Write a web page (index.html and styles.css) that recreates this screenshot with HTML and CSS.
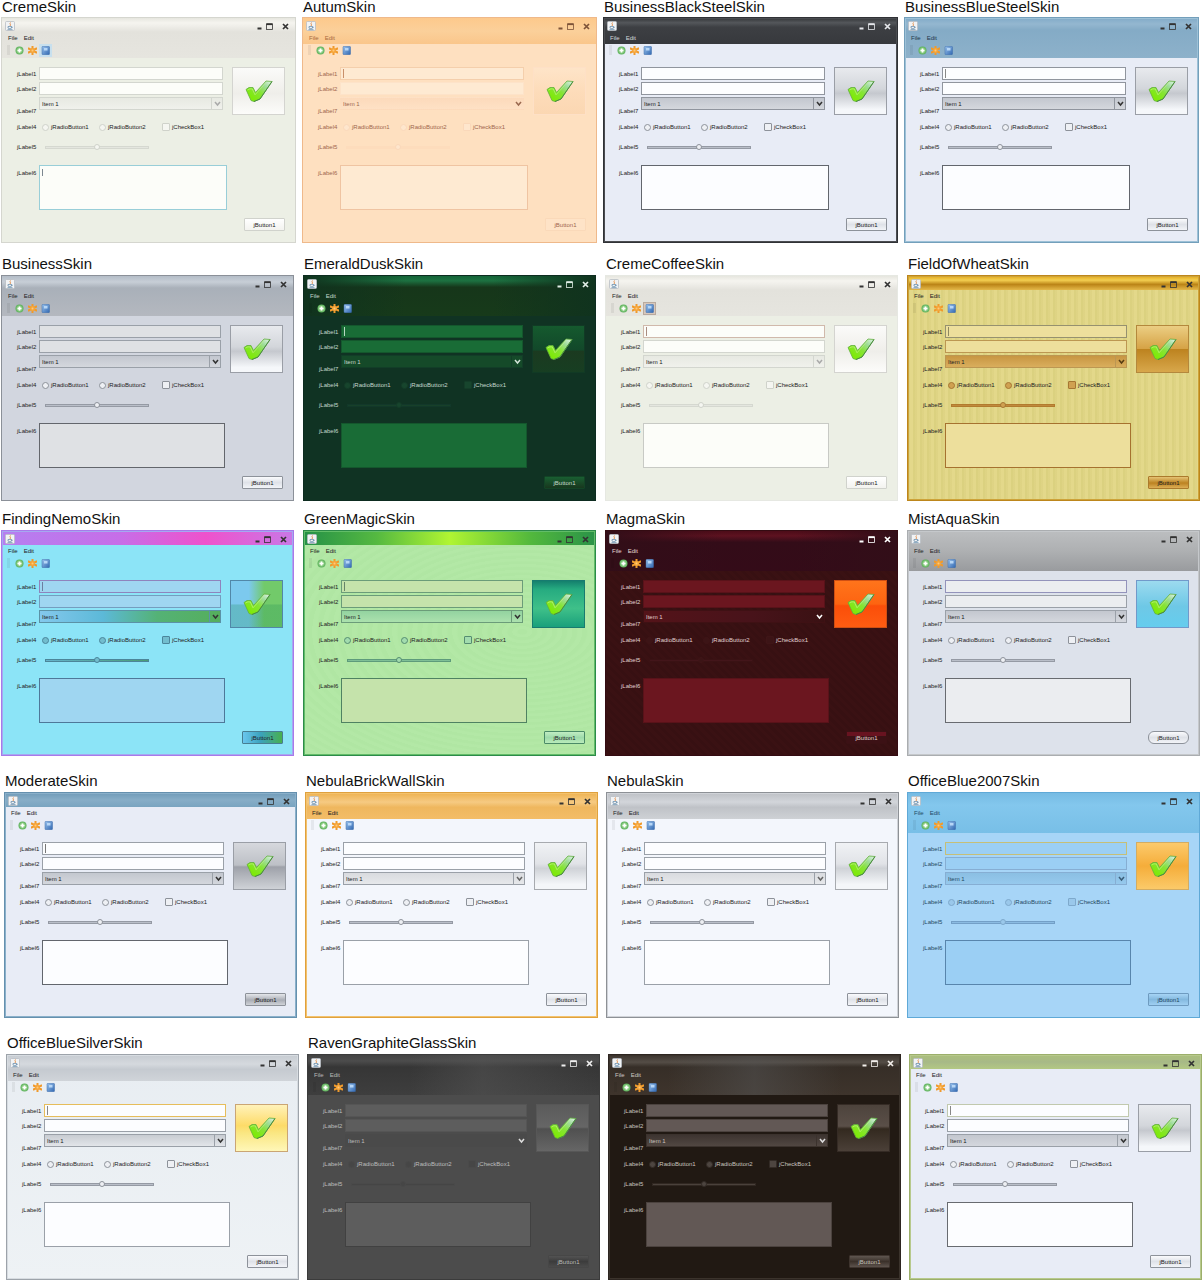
FILE: index.html
```html
<!DOCTYPE html>
<html lang="en">
<head>
<meta charset="utf-8">
<title>Skin gallery</title>
<link rel="stylesheet" href="styles.css">
</head>
<body>
<svg class="sprite" width="0" height="0" aria-hidden="true">
  <defs>
    <linearGradient id="tick-fill" x1="0" y1="1" x2="1" y2="0">
      <stop offset="0.2" stop-color="#7fea0a"/>
      <stop offset="0.5" stop-color="#86e436"/>
      <stop offset="0.75" stop-color="#9fdc9c"/>
      <stop offset="1" stop-color="#e4f6ea"/>
    </linearGradient>
    <radialGradient id="add-fill" cx="0.5" cy="0.5" r="0.6">
      <stop offset="0" stop-color="#c4ecb4"/>
      <stop offset="1" stop-color="#46a548"/>
    </radialGradient>
    <linearGradient id="book-fill" x1="0" y1="0" x2="1" y2="1">
      <stop offset="0" stop-color="#9cc4ee"/>
      <stop offset="1" stop-color="#2f66b0"/>
    </linearGradient>
  </defs>
  <symbol id="tick" viewBox="0 0 28 23">
    <path d="M1 9.500 4 7.500 8 7.500 10.500 12.500 21 1 27 1.500 15 19 9 21.500 6 20.500Z" fill="url(#tick-fill)" stroke="#62b03c" stroke-width="0.800" stroke-linejoin="round"/>
    <path d="M9 21.500 15 19 27 1.500" fill="none" stroke="#4a8a44" stroke-width="1" stroke-linejoin="round"/>
    <path d="M2.500 10 5 8.800 7.300 9 10 14.800 21 2.600" fill="none" stroke="#c4f28c" stroke-width="0.600"/>
  </symbol>
  <symbol id="add" viewBox="0 0 9 9">
    <circle cx="4.500" cy="4.500" r="4" fill="url(#add-fill)"/>
    <path d="M4.500 2.500v4M2.500 4.500h4" stroke="#fff" stroke-width="1.600"/>
  </symbol>
  <symbol id="star" viewBox="0 0 9 9">
    <path d="M4.500 0.300V8.700M0.500 2.500 8.500 6.500M0.500 6.500 8.500 2.500" stroke="#f09a2c" stroke-width="2" stroke-linecap="round"/>
    <circle cx="4.500" cy="4.500" r="2.400" fill="#f6a63c"/>
    <circle cx="4.500" cy="4.500" r="1" fill="#ffc978"/>
  </symbol>
  <symbol id="book" viewBox="0 0 9 9">
    <rect x="1" y="0.300" width="7.500" height="8.500" rx="1" fill="url(#book-fill)" stroke="#3c6cab" stroke-width="0.500"/>
    <rect x="3" y="2" width="3.500" height="2.500" fill="#b6d6f6"/>
  </symbol>
  <symbol id="cup" viewBox="0 0 10 10">
    <rect x="0.500" y="0.500" width="9" height="9" rx="1" fill="#f1f3f5" stroke="#b9bec4" stroke-width="0.800"/>
    <path d="M5.500 1.500C4 3 6.500 3.200 5 5" fill="none" stroke="#e0843c" stroke-width="0.900"/>
    <path d="M3 5.500h3.600v1.600q-1.800 1-3.600 0zM6.600 5.800q1.500 0 0 1.200M2.500 8.600h5" fill="none" stroke="#5f86a8" stroke-width="0.700"/>
  </symbol>
  <symbol id="min" viewBox="0 0 5 7"><path d="M0.500 5.500h4" stroke="currentColor" stroke-width="2"/></symbol>
  <symbol id="max" viewBox="0 0 7 7"><path d="M0.500 1.200h6" stroke="currentColor" stroke-width="1.800"/><rect x="0.500" y="1" width="6" height="5.500" fill="none" stroke="currentColor" stroke-width="0.800"/></symbol>
  <symbol id="close" viewBox="0 0 7 7"><path d="M1 1 6 6M6 1 1 6" stroke="currentColor" stroke-width="1.700"/></symbol>
  <symbol id="arrow" viewBox="0 0 7 7"><path d="M1 2 3.500 5 6 2" fill="none" stroke="currentColor" stroke-width="1.500"/></symbol>
</svg>
<main id="gallery" class="gallery"></main>
<script src="gallery.js"></script>
</body>
</html>
```
FILE: gallery.js
```js
const shelves = [
  { name: "first", skins: [["CremeSkin", "creme"], ["AutumSkin", "autumn"], ["BusinessBlackSteelSkin", "black-steel"], ["BusinessBlueSteelSkin", "blue-steel"]] },
  { name: "second", skins: [["BusinessSkin", "business"], ["EmeraldDuskSkin", "emerald"], ["CremeCoffeeSkin", "coffee"], ["FieldOfWheatSkin", "wheat"]] },
  { name: "third", skins: [["FindingNemoSkin", "nemo"], ["GreenMagicSkin", "green-magic"], ["MagmaSkin", "magma"], ["MistAquaSkin", "mist"]] },
  { name: "fourth", skins: [["ModerateSkin", "moderate"], ["NebulaBrickWallSkin", "brick"], ["NebulaSkin", "nebula"], ["OfficeBlue2007Skin", "office-blue"]] },
  { name: "fifth", skins: [["OfficeBlueSilverSkin", "office-silver"], ["RavenGraphiteGlassSkin", "raven"], ["", "graphite"], ["", "sage"]] }
];

const icon = (name, cls = "") => `<svg class="icon ${cls}" aria-hidden="true"><use href="#${name}"></use></svg>`;

const card = ([title, skin]) => `
<section class="card">
  <h2 class="card-title">${title}</h2>
  <div class="window ${skin}">
    <header class="titlebar">
      ${icon("cup", "app-icon")}
      <div class="window-controls">
        <button type="button" class="control control-min" aria-label="Minimize">${icon("min")}</button>
        <button type="button" class="control control-max" aria-label="Maximize">${icon("max")}</button>
        <button type="button" class="control" aria-label="Close">${icon("close")}</button>
      </div>
    </header>
    <nav class="menubar"><button type="button" class="menu">File</button><button type="button" class="menu">Edit</button></nav>
    <div class="toolbar">
      <button type="button" class="tool" aria-label="Add">${icon("add")}</button>
      <button type="button" class="tool" aria-label="Star">${icon("star")}</button>
      <button type="button" class="tool tool-book" aria-label="Book">${icon("book")}</button>
    </div>
    <form class="content">
      <div class="top">
        <div class="fields">
          <label for="${skin}-1">jLabel1</label><input type="text" class="field field-focus" id="${skin}-1">
          <label for="${skin}-2">jLabel2</label><input type="text" class="field" id="${skin}-2">
          <label class="combo-label" for="${skin}-7">jLabel7</label>
          <div class="combo"><select id="${skin}-7"><option>Item 1</option></select><span class="combo-arrow">${icon("arrow")}</span></div>
        </div>
        <button type="button" class="accept" aria-label="Accept">${icon("tick", "tick")}</button>
      </div>
      <div class="line options">
        <span>jLabel4</span>
        <div class="choices">
          <label class="choice"><input type="radio" name="${skin}-choice">jRadioButton1</label>
          <label class="choice"><input type="radio" name="${skin}-choice">jRadioButton2</label>
          <label class="choice"><input type="checkbox">jCheckBox1</label>
        </div>
      </div>
      <div class="line slide"><label for="${skin}-5">jLabel5</label><input type="range" class="slider" id="${skin}-5"></div>
      <div class="notes"><label for="${skin}-6">jLabel6</label><textarea class="area" id="${skin}-6"></textarea></div>
      <button type="button" class="push">jButton1</button>
    </form>
  </div>
</section>`;

document.getElementById("gallery").innerHTML = shelves
  .map(s => `<div class="shelf shelf-${s.name}">${s.skins.map(card).join("")}</div>`)
  .join("");
```
FILE: styles.css
```css
* { box-sizing: border-box; }

body {
  margin: 0;
  background: #fff;
  color: #111;
  font-family: "Liberation Sans", Arial, sans-serif;
}

button, input, select, textarea {
  margin: 0;
  padding: 0;
  border: 0;
  border-radius: 0;
  background: none;
  color: inherit;
  font: inherit;
}

.sprite { position: absolute; }
.icon { display: block; width: 9px; height: 9px; }

/* Gallery rows */
.shelf {
  display: grid;
  grid-template-columns: repeat(4, minmax(0, 1fr));
  column-gap: 9px;
  padding: 0 2px 0 1px;
}
.shelf-first { column-gap: 6px; padding-right: 3px; }
.shelf-second { margin-top: 15px; }
.shelf-third { margin-top: 12px; }
.shelf-fourth { margin-top: 19px; column-gap: 8px; padding-left: 4px; }
.shelf-fifth { margin-top: 19px; column-gap: 8px; padding: 0 0 0 6px; }

.card-title {
  min-height: 17px;
  margin: 0;
  padding-left: 1px;
  font-size: 15px;
  font-weight: 400;
  line-height: 11px;
  white-space: nowrap;
}
.shelf-first .card-title { line-height: 14px; }

/* Window frame */
.window {
  --ink: #222;
  --menu: #222;
  --control: #333;
  --inner: transparent;
  --sheen: linear-gradient(transparent, transparent);
  --head-size: 40px;
  --field: #fcfdff;
  --line: #9aa0a8;
  --focus: var(--line);
  --caret: transparent;
  --area: var(--field);
  --area-line: var(--line);
  --combo: linear-gradient(#c3c7cf, #d4d7dd);
  --combo-line: var(--line);
  --arrow: #333;
  --accept: linear-gradient(#e8eaee, #d3d6db 45%, #c5c8ce 55%, #f5f7fa 90%);
  --accept-line: #9a9ea6;
  --push: linear-gradient(#fafbfd, #dfe2e8 50%, #f2f4f8);
  --push-line: #8d929a;
  --mark: #eef0f4;
  --mark-line: #8d929a;
  --track: #b9bec8;
  --track-line: #959aa4;
  border: 1px solid var(--frame);
  background:
    var(--sheen) 0 0 / 100% var(--head-size) no-repeat,
    var(--head) 0 0 / 100% var(--head-size) no-repeat,
    var(--body);
  box-shadow: inset 0 0 0 1px var(--inner);
  color: var(--ink);
  font-size: 6px;
  line-height: 8px;
}

.titlebar {
  display: flex;
  align-items: center;
  justify-content: space-between;
  height: 15px;
  padding: 1px 6px 0 3px;
  color: var(--control);
}
.app-icon { width: 10px; height: 10px; }
.window-controls { display: flex; align-items: center; }
.control, .control .icon { width: 7px; height: 7px; }
.control-min, .control-min .icon { width: 5px; }
.control-min { margin-right: 4px; }
.control-max { margin-right: 9px; }

.menubar {
  display: flex;
  align-items: center;
  gap: 6px;
  height: 10px;
  padding-left: 6px;
  color: var(--menu);
}

.toolbar {
  display: flex;
  align-items: center;
  height: 14px;
  padding-left: 5px;
}
.toolbar::before {
  content: "";
  width: 3px;
  height: 10px;
  margin-right: 3px;
  background: #0000000f;
}
.tool {
  display: grid;
  place-items: center;
  width: 13px;
  height: 13px;
}

/* Form */
.content { padding: 10px 10px 11px 15px; }
.top { display: flex; gap: 9px; }
.fields {
  flex: 1;
  display: grid;
  grid-template-columns: 22px minmax(0, 1fr);
  grid-template-rows: 13px 13px 18px;
  row-gap: 2px;
  align-items: center;
}
.field {
  width: 100%;
  height: 13px;
  border: 1px solid var(--line);
  background: var(--field);
}
.field-focus {
  border-color: var(--focus);
  background: linear-gradient(var(--caret), var(--caret)) 2px 1px / 1px 9px no-repeat, var(--field);
}
.combo-label { align-self: end; }
.combo {
  align-self: start;
  display: flex;
  height: 13px;
  border: 1px solid var(--combo-line);
  background: var(--combo);
}
.combo select { flex: 1; min-width: 0; padding-left: 2px; appearance: none; }
.combo-arrow {
  display: grid;
  place-items: center;
  width: 11px;
  border-left: 1px solid var(--combo-line);
  color: var(--arrow);
}
.combo-arrow .icon { width: 7px; height: 7px; }

.accept {
  display: grid;
  place-items: center;
  width: 53px;
  height: 48px;
  border: 1px solid var(--accept-line);
  background: var(--accept);
}
.tick { width: 28px; height: 23px; }

.line {
  display: grid;
  grid-template-columns: 22px minmax(0, 1fr);
  align-items: center;
  height: 10px;
}
.options { margin-top: 7px; }
.choices {
  display: grid;
  grid-template-columns: 57px 63px auto;
  padding-left: 3px;
}
.choice { display: flex; align-items: center; gap: 2px; white-space: nowrap; }
.choice input {
  flex: none;
  width: 7px;
  height: 7px;
  appearance: none;
  border: 1px solid var(--mark-line);
  border-radius: 4px;
  background: var(--mark);
}
.choice input[type="checkbox"] { width: 8px; height: 8px; border-radius: 1px; }

.slide { margin-top: 10px; }
.slider {
  width: 104px;
  height: 8px;
  margin-left: 6px;
  appearance: none;
}
.slider::-webkit-slider-runnable-track {
  height: 3px;
  border: 1px solid var(--track-line);
  background: var(--track);
}
.slider::-webkit-slider-thumb {
  width: 6px;
  height: 6px;
  margin-top: -3px;
  appearance: none;
  border: 1px solid var(--mark-line);
  border-radius: 3px;
  background: var(--mark);
}

.notes {
  display: grid;
  grid-template-columns: 22px minmax(0, 1fr);
  margin-top: 13px;
  padding-right: 58px;
}
.notes label { padding-top: 4px; }
.area {
  display: block;
  width: 100%;
  height: 45px;
  border: 1px solid var(--area-line);
  background: var(--area);
  resize: none;
}
.push {
  display: block;
  width: 41px;
  height: 13px;
  margin: 8px 0 0 auto;
  border: 1px solid var(--push-line);
  border-radius: 1px;
  background: var(--push);
}

/* Skins */
.creme, .coffee {
  --frame: #d5d6cf;
  --head: linear-gradient(#e6e6df, #f5f4ef 12%, #f1f0eb 18%, #e3e2dc 35%, #e6e5df);
  --body: #ecefe5;
  --field: #fcfdf9;
  --line: #d3d6cf;
  --combo: linear-gradient(#e7e9e2, #f0f1ec);
  --arrow: #aaa;
  --accept: linear-gradient(#fbfbf9, #efeeea 55%, #fcfcfa);
  --accept-line: #d4d4d0;
  --push: linear-gradient(#fff, #f3f3ef);
  --push-line: #d0d2cc;
  --mark: #f5f6f1;
  --mark-line: #cfd2ca;
  --track: #e4e6df;
  --track-line: #d5d8d0;
}
.creme .tool-book { background: #c8e0ee; }
.creme .area {
  border-color: #98ced8;
  background: linear-gradient(#7c8790, #7c8790) 2px 3px / 1px 7px no-repeat, var(--area);
}
.coffee { --frame: #e6e8e2; --focus: #d0b9ab; --caret: #a98d80; --area-line: #c8cac5; }
.coffee .tool-book { border: 1px solid #b9aa9e; background: #d7c8bd; }

.autumn {
  --frame: #efb98b;
  --head: linear-gradient(#fdc98c, #fbd09a 50%, #fac68b);
  --head-size: 26px;
  --body: #fee0c0;
  --ink: #a0674e;
  --menu: #a86a3e;
  --control: #7d5338;
  --field: #feead2;
  --line: #fde3c9;
  --focus: #f4cfac;
  --caret: #c98f6a;
  --area-line: #efc4a2;
  --combo: linear-gradient(#fcdabb, #fee1c5);
  --combo-line: transparent;
  --arrow: #9b6a50;
  --accept: linear-gradient(#fee4c8, #fddcba 50%, #fbd7b2);
  --accept-line: #fee0c6;
  --push: #fee3c7;
  --push-line: #fad9b9;
  --mark: #fee6cd;
  --mark-line: #fad8ba;
  --track: #fddcbc;
  --track-line: #fddcbc;
}

.black-steel {
  --frame: #303236;
  --inner: #4a4c50;
  --head: linear-gradient(#333538, #54575b 18%, #3d3f43 35%, #37393d);
  --head-size: 26px;
  --body: #e8ecf6;
  --menu: #d5d7da;
  --control: #e4e6ea;
  --line: #90959e;
  --area-line: #62666d;
}

.blue-steel {
  --frame: #739fbb;
  --inner: #9dc1d7;
  --head: linear-gradient(#82abc8, #94b7d0 15%, #84abc6 30%, #8db1ca);
  --body: #e8ecf6;
  --menu: #22384a;
  --caret: #888;
  --line: #90959e;
  --area-line: #62666d;
}

.business {
  --frame: #8b9098;
  --head: linear-gradient(#b4bdc7, #c7ced6 15%, #a9b0b9 30%, #b4b8bf);
  --body: #d2d6df;
  --field: #dfe1e4;
  --area-line: #63666c;
}

.emerald {
  --frame: #0d2c20;
  --sheen: linear-gradient(90deg, #10331e, transparent 35%, transparent 65%, #10331e);
  --head: linear-gradient(#146538, #1d7141 12%, #16361a 28%, #173a1a);
  --body: #103323;
  --ink: #c5d7cc;
  --menu: #c5d7cc;
  --control: #e1eee6;
  --field: #196c36;
  --line: #14572d;
  --caret: #b8d8c3;
  --combo: #154a29;
  --combo-line: #123e28;
  --arrow: #d1e3d7;
  --accept: linear-gradient(#155a2e, #12482a 52%, #1b3a20 55%, #173e22);
  --accept-line: #113a25;
  --push: linear-gradient(#195f32, #18371e);
  --push-line: #134426;
  --mark: #17452d;
  --mark-line: #143c28;
  --track: #174029;
  --track-line: #12382a;
}

.wheat {
  --frame: #bd861b;
  --inner: #cda33a;
  --head: linear-gradient(#e2a91d, #f3ce50 30%, #bb8417 60%, #e4b849);
  --head-size: 14px;
  --body: repeating-linear-gradient(90deg, #dfd28080 0 2px, #e8db8c80 2px 5px, #d8cd7780 5px 7px), #ded588;
  --field: #eddf9c;
  --line: #bc9752;
  --focus: #96916f;
  --caret: #8e885f;
  --area-line: #a6722f;
  --combo: linear-gradient(#c89642, #d9ae5d);
  --arrow: #573d12;
  --accept: linear-gradient(#ebce83, #d6a346 49%, #bd831f 51%, #d8a74b);
  --accept-line: #b4883c;
  --push: linear-gradient(#e5c374, #bc8221 55%, #dcae55);
  --push-line: #ab7a2c;
  --mark: #d0a151;
  --mark-line: #a67733;
  --track: #c08a3b;
  --track-line: #b27b2f;
}

.nemo {
  --frame: #a879ea;
  --inner: #a6a8f0;
  --head: linear-gradient(90deg, #b57ff0, #c66ee8 40%, #ee52cc 70%, #c978e6);
  --head-size: 14px;
  --body: #8ce4f7;
  --field: #9fd6f1;
  --line: #749dbf;
  --focus: #8f83bd;
  --caret: #6d7fa0;
  --area-line: #4e7899;
  --combo: linear-gradient(90deg, #84c8ec, #5cb9d8 35%, #54b276 65%, #55ae5c);
  --combo-line: #5b92a6;
  --accept: linear-gradient(transparent 50%, #1d8c5540 52%), linear-gradient(90deg, #7cc9ee 35%, #72ca6a 65%);
  --accept-line: #5187a8;
  --push: linear-gradient(90deg, #6ac6ee, #3ba2bd 45%, #48b04f);
  --push-line: #477e92;
  --mark: #72bdce;
  --mark-line: #4b859b;
  --track: linear-gradient(90deg, #65b3cc, #4a9d74);
  --track-line: #4c8599;
}

.green-magic {
  --frame: #2c8a49;
  --inner: #62bd68;
  --head: linear-gradient(90deg, #259047, #55b941 25%, #b0f532 50%, #52b83d 78%, #2b9348);
  --head-size: 14px;
  --body: repeating-radial-gradient(ellipse at 75% 45%, #b0e6a3 0 4px, #b3e8a6 6px 10px);
  --field: #c5e3ab;
  --line: #6b9c79;
  --caret: #678469;
  --area-line: #4f8262;
  --combo: linear-gradient(#93d3a0, #abe1ad);
  --accept: linear-gradient(#14806d, #26ab80 18%, #3fc089 60%, #19a07b);
  --accept-line: #177b70;
  --push: linear-gradient(#c1edc3, #9edbab 50%, #b9ebba);
  --push-line: #4a8a67;
  --mark: #a2dcae;
  --mark-line: #558c71;
  --track: #7fbf96;
  --track-line: #5e9b7b;
}

.magma {
  --frame: #340b12;
  --sheen: linear-gradient(90deg, #320e18, transparent 40%, transparent 65%, #320e18);
  --head: linear-gradient(#4c0c18, #5d1220 12%, #330c18 28%, #340b18);
  --body: repeating-linear-gradient(45deg, #3a1113 0 3px, #371012 3px 6px);
  --ink: #e0cfcf;
  --menu: #e5d5d5;
  --control: #fff;
  --field: #6b161f;
  --line: #591219;
  --combo: linear-gradient(90deg, #541319, #48131a 60%, #3a1113);
  --combo-line: #3f1114;
  --arrow: #fff;
  --accept: linear-gradient(#ff741b, #fd6411 50%, #fb4e09 54%, #ff5c12);
  --accept-line: #cf4f13;
  --push: linear-gradient(#681320 35%, #3c1115 40%);
  --push-line: #3b1114;
  --mark: #3c1416;
  --mark-line: #3f1517;
  --track: #43151a;
  --track-line: #3a1214;
}

.mist {
  --frame: #aaadb0;
  --inner: #c5c8cb;
  --head: linear-gradient(#bcbec0, #aeb0b2 50%, #999b9e);
  --body: #dde2eb;
  --field: #ebedf0;
  --focus: #9393bb;
  --area-line: #686b70;
  --accept: linear-gradient(#9cdaef, #6ec8e6 55%, #65cdee);
  --accept-line: #7199ca;
}
.mist .push { border-radius: 6px; }

.moderate {
  --frame: #6590ae;
  --inner: #8ab0ca;
  --head: linear-gradient(#719cb9, #87adc7 50%, #79a4c0);
  --head-size: 14px;
  --body: #e8ecf6;
  --caret: #777;
  --area-line: #62666d;
  --accept: linear-gradient(#d6d8dd, #bdc0c6 48%, #9ea1a9 52%, #cfd2d7);
  --push: linear-gradient(#e4e6ea, #a9adb5 55%, #d0d3d8);
}

.brick {
  --frame: #dfa13e;
  --inner: #f3c26d;
  --head: linear-gradient(#eeb251, #f6ca82 35%, #efb75e 55%, #f3bd68);
  --head-size: 26px;
  --body: #f3f6fc;
}
.brick, .nebula {
  --combo: linear-gradient(#d9dbdf, #e6e8eb);
  --arrow: #666;
  --accept: linear-gradient(#f0f2f5, #e1e3e7 45%, #cfd2d7 55%, #f4f6f9 90%);
  --accept-line: #a7aaaf;
}
.nebula {
  --frame: #8d9196;
  --inner: #d0d3d8;
  --head: linear-gradient(#bec1c6, #d2d5da 35%, #bfc2c7 55%, #ced1d5);
  --head-size: 26px;
  --body: #f3f6fc;
}

.office-blue {
  --frame: #5fa9d7;
  --head: linear-gradient(#76bbe3, #83c7ed 30%, #78bfe7);
  --body: #a7d5f7;
  --ink: #244963;
  --menu: #244963;
  --field: #9bcff4;
  --line: #86aed3;
  --focus: #c6bf77;
  --area-line: #5885ac;
  --combo: linear-gradient(#8bbfe3, #96c9ed);
  --arrow: #3b5e79;
  --accept: linear-gradient(#fcca6c, #f5ad3a 50%, #fbca69);
  --accept-line: #d2ac63;
  --push: linear-gradient(#a6d4f5, #84b9df 50%, #9fcff2);
  --push-line: #6e9bc0;
  --mark: #9ac8eb;
  --mark-line: #7ea9cc;
  --track: #8bbbe2;
  --track-line: #739fc7;
}

.office-silver {
  --frame: #9da3aa;
  --inner: #d7dce1;
  --head: linear-gradient(#c6cbd1, #d5d9de 35%, #c5cad0 55%, #d0d4d9);
  --head-size: 26px;
  --body: linear-gradient(#e8edf2, #eef2f5);
  --focus: #e6bd5b;
  --caret: #888;
  --combo: linear-gradient(#c8ccd2, #e2e5e9);
  --accept: linear-gradient(#fff2ba, #fddb68 45%, #fae681 60%, #fff7b8);
  --accept-line: #caa574;
}

.raven {
  --frame: #3b3b3b;
  --sheen: linear-gradient(90deg, transparent 35%, #55555580 60%, transparent);
  --head: linear-gradient(#434343, #4c4c4c 15%, #363636 30%, #3e3e3e);
  --body: #4c4c4c;
  --ink: #bcbcbc;
  --menu: #b8b8b8;
  --control: #eee;
  --field: #5d5d5d;
  --line: #555;
  --area-line: #414141;
  --combo: #4a4a4a;
  --combo-line: #4a4a4a;
  --arrow: #ddd;
  --accept: linear-gradient(#5b5b5b, #666 48%, #505050 52%, #666);
  --accept-line: #575757;
  --push: linear-gradient(#535353, #3c3c3c 50%, #4b4b4b);
  --push-line: #474747;
  --mark: #464646;
  --mark-line: #4a4a4a;
  --track: #454545;
  --track-line: #4a4a4a;
}

.graphite {
  --frame: #2d2520;
  --inner: #3b332c;
  --sheen: linear-gradient(90deg, transparent 20%, #55555580 50%, transparent 80%);
  --head: linear-gradient(#3c342e, #544d46 18%, #362e27 30%, #3e342c);
  --body: #211913;
  --ink: #c9c3be;
  --menu: #cdc7c2;
  --control: #f2eeea;
  --field: #625855;
  --line: #4b423e;
  --combo: linear-gradient(#3d3430, #514742);
  --combo-line: #3b322d;
  --arrow: #ddd;
  --accept: linear-gradient(#4d433c, #5a4f48 46%, #33291f 52%, #4b4038);
  --accept-line: #352b25;
  --push: linear-gradient(#5f5650, #3b312a 50%, #5d534d);
  --push-line: #3e342e;
  --mark: #4d4540;
  --mark-line: #332b26;
  --track: #4a413b;
  --track-line: #302721;
}

.sage {
  --frame: #9caf6b;
  --inner: #b7c98c;
  --head: linear-gradient(#acbf7c, #a7b987 50%, #b3c883);
  --head-size: 14px;
  --body: #e8ecf6;
  --focus: #c1c9ae;
  --caret: #888;
  --area-line: #686b70;
}
```
